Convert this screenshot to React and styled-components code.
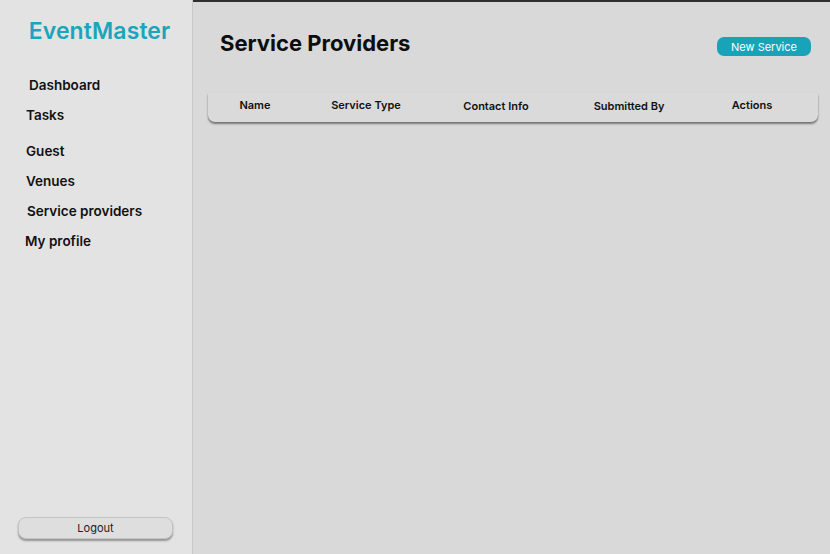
import React from 'react';
import styled, { createGlobalStyle } from 'styled-components';

const GlobalStyle = createGlobalStyle`
	html, body {
		margin: 0;
		padding: 0;
		height: 100%;
	}
	body {
		font-family: Inter, "Noto Sans", "Liberation Sans", sans-serif;
		background: #d9d9d9;
		color: #111;
	}
	#root {
		height: 100%;
	}
`;

const navItems = [
	{ label: 'Dashboard', indent: 29, gap: 0 },
	{ label: 'Tasks', indent: 26, gap: 13 },
	{ label: 'Guest', indent: 26, gap: 19 },
	{ label: 'Venues', indent: 26, gap: 13 },
	{ label: 'Service providers', indent: 27, gap: 13 },
	{ label: 'My profile', indent: 25, gap: 13 },
];

const columns = [
	{ label: 'Name', width: 94, drop: 0 },
	{ label: 'Service Type', width: 128, drop: 0 },
	{ label: 'Contact Info', width: 132, drop: 1 },
	{ label: 'Submitted By', width: 134, drop: 1 },
	{ label: 'Actions', width: 112, drop: 0 },
];

function App() {
	return (
		<>
			<GlobalStyle />
			<Layout>
				<Sidebar>
					<Logo>EventMaster</Logo>
					<Nav>
						{navItems.map((item) => (
							<NavItem key={item.label} indent={item.indent} gap={item.gap}>
								{item.label}
							</NavItem>
						))}
					</Nav>
					<LogoutButton>Logout</LogoutButton>
				</Sidebar>
				<Main>
					<Header>
						<Title>Service Providers</Title>
						<NewButton>New Service</NewButton>
					</Header>
					<TableHead>
						{columns.map((col) => (
							<HeadCell key={col.label} width={col.width} drop={col.drop}>
								{col.label}
							</HeadCell>
						))}
					</TableHead>
				</Main>
			</Layout>
		</>
	);
}

export default App;

const Layout = styled.div`
	display: flex;
	height: 100vh;
`;

const Sidebar = styled.aside`
	width: 193px;
	flex-shrink: 0;
	background: #e3e3e3;
	border-right: 1px solid #c9c9c9;
	display: flex;
	flex-direction: column;
	padding-bottom: 15px;
	box-sizing: border-box;
`;

const Logo = styled.div`
	color: #1ba5bc;
	font-size: 23px;
	font-weight: 600;
	text-align: center;
	padding: 17px 0 0 7px;
	line-height: 28px;
	letter-spacing: 0.1px;
`;

const Nav = styled.nav`
	display: flex;
	flex-direction: column;
	margin-top: 32px;
`;

const NavItem = styled.div`
	font-size: 13.5px;
	font-weight: 600;
	line-height: 17px;
	padding-left: ${(p) => p.indent}px;
	margin-top: ${(p) => p.gap}px;
	color: #111;
`;

const LogoutButton = styled.button`
	margin: auto 19px 0 18px;
	height: 22px;
	border-radius: 8px;
	border: 1px solid #c4c4c4;
	background: #dedede;
	box-shadow: 0 2px 2px rgba(0, 0, 0, 0.35);
	font-family: Inter, "Liberation Sans", sans-serif;
	font-size: 11px;
	color: #222;
	padding: 0;
`;

const Main = styled.main`
	flex: 1;
	border-top: 2px solid #2f2f2f;
	background: #d9d9d9;
	padding: 0 12px 0 15px;
	box-sizing: border-box;
`;

const Header = styled.div`
	display: flex;
	justify-content: space-between;
	align-items: flex-start;
	padding: 0 7px 0 12px;
`;

const Title = styled.h1`
	margin: 27px 0 0;
	font-size: 22px;
	font-weight: 700;
	line-height: 28px;
	color: #0d0d0d;
`;

const NewButton = styled.button`
	margin-top: 35px;
	width: 94px;
	height: 19px;
	border: none;
	border-radius: 7px;
	background: #18a3b9;
	color: #fff;
	font-family: Inter, "Liberation Sans", sans-serif;
	font-size: 11px;
	padding: 0;
`;

const TableHead = styled.div`
	margin-top: 36px;
	display: flex;
	height: 29px;
	align-items: flex-start;
	padding-top: 6px;
	box-sizing: border-box;
	border-radius: 0 0 7px 7px;
	box-shadow: 0 2px 2px rgba(0, 0, 0, 0.45), 0 0 1px rgba(0, 0, 0, 0.15);
	background: #dadada;
`;

const HeadCell = styled.div`
	width: ${(p) => p.width}px;
	text-align: center;
	font-size: 11px;
	font-weight: 600;
	line-height: 13px;
	color: #111;
	padding-top: ${(p) => p.drop}px;
`;
